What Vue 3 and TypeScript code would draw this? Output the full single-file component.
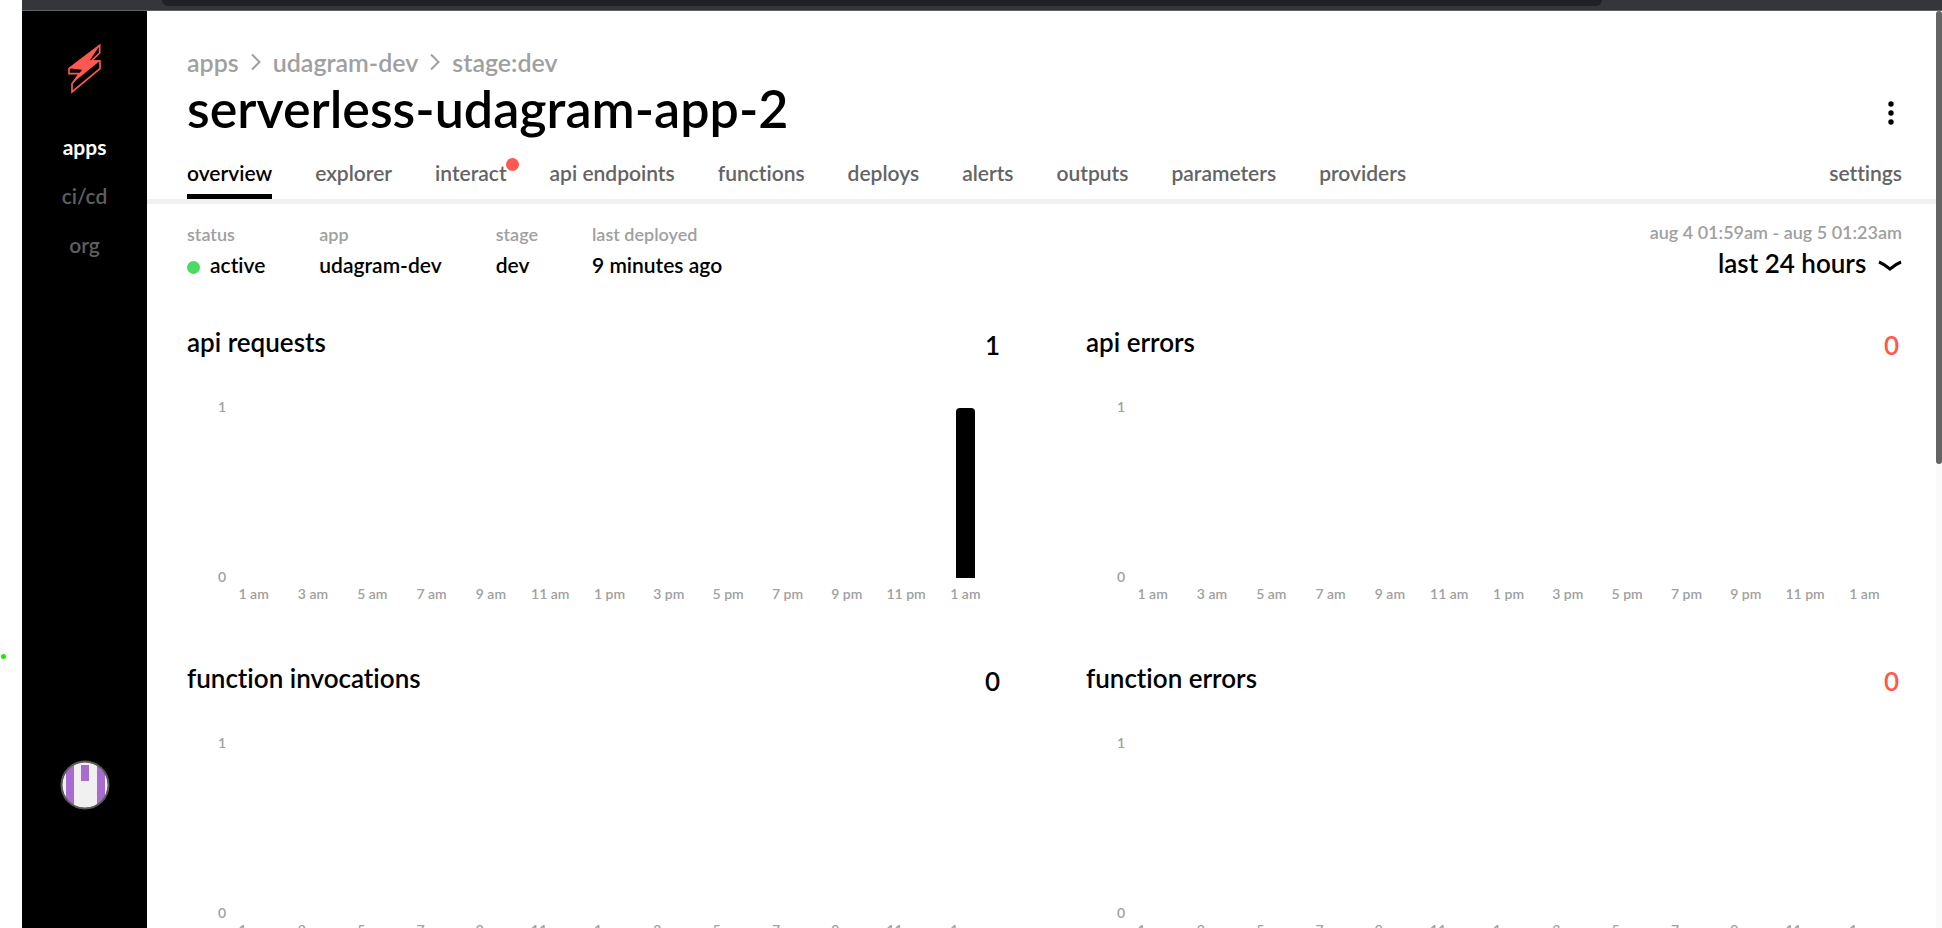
<script setup lang="ts">
import { ref } from 'vue'

interface Chart {
  title: string
  total: number
  error: boolean
  values: number[]
}

const navItems: string[] = ['apps', 'ci/cd', 'org']
const activeNav = ref('apps')

const crumbs: string[] = ['apps', 'udagram-dev', 'stage:dev']

const tabs: string[] = [
  'overview', 'explorer', 'interact', 'api endpoints', 'functions',
  'deploys', 'alerts', 'outputs', 'parameters', 'providers',
]
const activeTab = ref('overview')

const hours: string[] = [
  '1 am', '3 am', '5 am', '7 am', '9 am', '11 am', '1 pm',
  '3 pm', '5 pm', '7 pm', '9 pm', '11 pm', '1 am',
]

const empty: number[] = Array.from({ length: 25 }, () => 0)
const lastHour: number[] = empty.map((_, i) => (i === 24 ? 1 : 0))

const charts: Chart[] = [
  { title: 'api requests', total: 1, error: false, values: lastHour },
  { title: 'api errors', total: 0, error: true, values: empty },
  { title: 'function invocations', total: 0, error: false, values: empty },
  { title: 'function errors', total: 0, error: true, values: empty },
]

const range = ref('last 24 hours')
</script>

<template>
  <div class="screen">
    <div class="gutter"><span class="gutter-dot"></span></div>
    <div class="window">
      <div class="browser-edge"><div class="address-bar"></div></div>
      <div class="viewport">
        <nav class="sidebar" aria-label="Main">
          <a href="#" class="logo" aria-label="Home">
            <svg width="33" height="50" viewBox="0 0 99 150">
              <path class="bolt-fill" d="M97 1 1 73 42 77 10 120 98 49 66 49Z" />
              <path class="bolt-line" d="M95 4V27L70 51H96V74L12 144V119L34 89H3V74Z" />
            </svg>
          </a>
          <a
            v-for="item in navItems"
            :key="item"
            href="#"
            class="nav-item"
            :class="{ active: item === activeNav }"
            @click.prevent="activeNav = item"
          >{{ item }}</a>
          <button class="avatar" type="button" aria-label="Account">
            <svg width="50" height="50" viewBox="0 0 50 50">
              <defs>
                <clipPath id="avatar-clip"><circle cx="25" cy="25" r="23" /></clipPath>
              </defs>
              <g clip-path="url(#avatar-clip)">
                <rect width="50" height="50" fill="#f0f0f0" />
                <rect x="6" y="5" width="8" height="40" fill="#a86bcf" />
                <rect x="37" y="5" width="8" height="40" fill="#a86bcf" />
                <rect x="21" y="5" width="8" height="16" fill="#a86bcf" />
              </g>
              <circle cx="25" cy="25" r="23.5" fill="none" stroke="#5b5b5b" stroke-width="2" />
            </svg>
          </button>
        </nav>

        <main class="content">
          <header class="header">
            <div class="crumbs">
              <template v-for="(crumb, i) in crumbs" :key="crumb">
                <svg v-if="i > 0" class="crumb-arrow" width="10" height="18" viewBox="0 0 10 18">
                  <path d="M1 1.5 8.5 9 1 16.5" fill="none" stroke="#a0a0a0" stroke-width="2" />
                </svg>
                <a href="#">{{ crumb }}</a>
              </template>
            </div>
            <div class="title-row">
              <h1>serverless-udagram-app-2</h1>
              <button class="more" type="button" aria-label="More actions">
                <svg width="6" height="24" viewBox="0 0 6 24">
                  <circle cx="3" cy="3" r="2.7" />
                  <circle cx="3" cy="12" r="2.7" />
                  <circle cx="3" cy="21" r="2.7" />
                </svg>
              </button>
            </div>
            <div class="tabs">
              <a
                v-for="tab in tabs"
                :key="tab"
                href="#"
                class="tab"
                :class="{ active: tab === activeTab }"
                @click.prevent="activeTab = tab"
              >{{ tab }}<span v-if="tab === 'interact'" class="badge"></span></a>
              <a href="#" class="tab settings">settings</a>
            </div>
          </header>

          <section class="summary">
            <dl class="facts">
              <div><dt>status</dt><dd><span class="status-dot"></span>active</dd></div>
              <div><dt>app</dt><dd>udagram-dev</dd></div>
              <div><dt>stage</dt><dd>dev</dd></div>
              <div><dt>last deployed</dt><dd>9 minutes ago</dd></div>
            </dl>
            <div class="period">
              <label class="dates" for="range">aug 4 01:59am - aug 5 01:23am</label>
              <div class="range">
                <select id="range" v-model="range">
                  <option>last 24 hours</option>
                </select>
                <svg width="24" height="12" viewBox="0 0 24 12">
                  <path d="M1 2Q6 4 12 9Q18 4 23 2" fill="none" stroke="#000" stroke-width="3" />
                </svg>
              </div>
            </div>
          </section>

          <section class="charts">
            <article v-for="chart in charts" :key="chart.title" class="chart">
              <div class="chart-head">
                <h2>{{ chart.title }}</h2>
                <span class="total" :class="{ error: chart.error }">{{ chart.total }}</span>
              </div>
              <div class="plot-row">
                <div class="y-axis"><span>1</span><span>0</span></div>
                <div class="plot">
                  <div v-for="(value, i) in chart.values" :key="i" class="slot">
                    <div class="bar" :style="{ height: value * 100 + '%' }"></div>
                  </div>
                </div>
              </div>
              <div class="x-axis">
                <span v-for="(hour, i) in hours" :key="i">{{ hour }}</span>
              </div>
            </article>
          </section>
        </main>
        <div class="scroll-track"><div class="scroll-thumb"></div></div>
      </div>
    </div>
  </div>
</template>

<style>
body {
  margin: 0;
  overflow: hidden;
}
</style>

<style scoped>
.screen {
  display: flex;
  height: 100vh;
  overflow: hidden;
  background: #fff;
  color: #000;
  font-family: Lato, "Open Sans", sans-serif;
  font-weight: 600;
  font-variant-ligatures: none;
}

a {
  color: inherit;
  text-decoration: none;
}

button,
select {
  padding: 0;
  border: 0;
  background: none;
  color: inherit;
  font: inherit;
  cursor: pointer;
}

svg {
  display: block;
}

.gutter {
  flex: none;
  width: 22px;
}

.gutter-dot {
  display: block;
  width: 5px;
  height: 5px;
  margin: 654px 0 0 1px;
  border-radius: 50%;
  background: #22e600;
}

.window {
  display: flex;
  flex: 1;
  flex-direction: column;
  min-width: 0;
}

.browser-edge {
  flex: none;
  height: 10px;
  padding: 0 340px 0 140px;
  border-bottom: 1px solid #626366;
  background: #35363a;
}

.address-bar {
  height: 6px;
  border-radius: 0 0 14px 14px;
  background: #202124;
}

.viewport {
  display: flex;
  flex: 1;
  min-height: 0;
}

.sidebar {
  display: flex;
  flex: none;
  flex-direction: column;
  align-items: center;
  box-sizing: border-box;
  width: 125px;
  padding: 33px 0 118px;
  background: #000;
}

.logo {
  margin-bottom: 30px;
}

.bolt-fill {
  fill: #ff5850;
}

.bolt-line {
  fill: none;
  stroke: #ff5850;
  stroke-width: 5;
}

.nav-item {
  padding: 9px 0 12px;
  color: #5f5f5f;
  font-size: 21px;
  line-height: 28px;
}

.nav-item.active {
  color: #fff;
  font-weight: 700;
}

.avatar {
  margin-top: auto;
}

.content {
  flex: 1;
  min-width: 0;
}

.header {
  padding: 35px 34px 0 40px;
  border-bottom: 5px solid #f0f0f0;
}

.crumbs {
  display: flex;
  align-items: center;
  gap: 12px;
  color: #a0a0a0;
  font-size: 25px;
  line-height: 32px;
}

.title-row {
  display: flex;
  align-items: center;
  justify-content: space-between;
  height: 60px;
}

h1 {
  margin: 0;
  font-size: 52px;
  font-weight: 600;
  line-height: 60px;
}

.more {
  padding: 10px 8px 0;
}

.tabs {
  display: flex;
  gap: 43px;
  margin-top: 20px;
  color: #646464;
  font-size: 21px;
  line-height: 30px;
}

.tab {
  position: relative;
  padding-bottom: 6px;
  border-bottom: 5px solid transparent;
  white-space: nowrap;
}

.tab.active {
  border-color: #000;
  color: #000;
}

.settings {
  margin-left: auto;
}

.badge {
  position: absolute;
  top: 0;
  right: -12px;
  width: 13px;
  height: 13px;
  border-radius: 50%;
  background: #ff5850;
}

.summary {
  display: flex;
  justify-content: space-between;
  padding: 15px 34px 0 40px;
}

.facts {
  display: flex;
  gap: 54px;
  margin: 0;
}

dt {
  color: #a0a0a0;
  font-size: 18px;
  line-height: 30px;
}

dd {
  display: flex;
  align-items: center;
  gap: 10px;
  margin: 0;
  font-size: 21px;
  line-height: 32px;
}

.status-dot {
  width: 13px;
  height: 13px;
  margin-top: 4px;
  border-radius: 50%;
  background: #4cd964;
}

.period {
  display: flex;
  flex-direction: column;
  align-items: flex-end;
}

.dates {
  color: #a0a0a0;
  font-size: 18px;
  line-height: 26px;
}

.range {
  display: flex;
  align-items: center;
  gap: 11px;
}

.range svg {
  margin-top: 6px;
}

.range select {
  appearance: none;
  font-size: 26px;
  line-height: 36px;
}

.charts {
  display: grid;
  grid-template-columns: 1fr 1fr;
  column-gap: 83px;
  padding: 43px 34px 0 40px;
}

.chart {
  min-width: 0;
  height: 336px;
}

.chart-head {
  display: flex;
  align-items: center;
  justify-content: space-between;
  height: 36px;
  padding-right: 3px;
}

h2 {
  margin: 0;
  font-size: 26px;
  font-weight: 600;
  line-height: 36px;
}

.total {
  padding-top: 5px;
  font-size: 26px;
  line-height: 36px;
}

.total.error {
  color: #ff5850;
}

.plot-row {
  display: flex;
  margin-top: 48px;
  padding-right: 23px;
}

.y-axis {
  display: flex;
  flex: none;
  flex-direction: column;
  justify-content: space-between;
  width: 39px;
  margin: -11px 13px -9px 0;
  color: #a0a0a0;
  font-size: 14px;
  line-height: 20px;
  text-align: right;
}

.plot {
  display: flex;
  flex: 1;
  height: 170px;
}

.slot {
  display: flex;
  flex: 1;
  align-items: flex-end;
  justify-content: center;
}

.bar {
  width: 19px;
  border-radius: 4px 4px 0 0;
  background: #000;
}

.x-axis {
  display: flex;
  padding: 6px 8px 0 37px;
  color: #a0a0a0;
  font-size: 14px;
  line-height: 20px;
}

.x-axis span {
  flex: 1;
  text-align: center;
  white-space: nowrap;
}

.scroll-track {
  flex: none;
  width: 6px;
  background: #fafafa;
}

.scroll-thumb {
  height: 453px;
  border-radius: 3px;
  background: #646464;
}
</style>
